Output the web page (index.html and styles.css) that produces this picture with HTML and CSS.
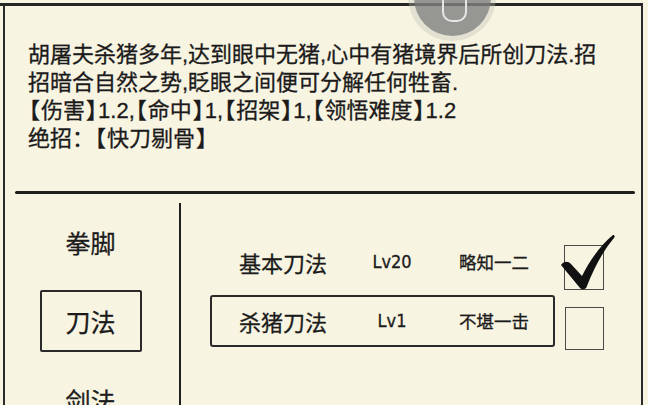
FILE: index.html
```html
<!DOCTYPE html>
<html lang="zh-CN">
<head>
<meta charset="utf-8">
<title>武学</title>
<link rel="stylesheet" href="styles.css">
</head>
<body>
<div class="frame">
  <div class="desc">
    胡屠夫杀猪多年,达到眼中无猪,心中有猪境界后所创刀法.招<br>
    招暗合自然之势,眨眼之间便可分解任何牲畜.<br>
    <span class="bk">【</span>伤害<span class="bk">】</span>1.2,<span class="bk">【</span>命中<span class="bk">】</span>1,<span class="bk">【</span>招架<span class="bk">】</span>1,<span class="bk">【</span>领悟难度<span class="bk">】</span>1.2<br>
    绝招：<span class="bk">【</span>快刀剔骨<span class="bk">】</span>
  </div>
  <div class="rule"></div>
  <div class="lower">
    <nav class="tabs">
      <div class="tab">拳脚</div>
      <div class="tab active">刀法</div>
      <div class="tab">剑法</div>
    </nav>
    <div class="skills">
      <div class="row">
        <div class="skill">
          <span class="name">基本刀法</span>
          <span class="lv">Lv20</span>
          <span class="grade">略知一二</span>
        </div>
        <div class="check on">
          <svg class="tick" viewBox="0 0 60 60" width="60" height="60">
            <path d="M3 29 C6 25 10 25 13 28 L24 40 C33 22 44 8 55 -1 C57 -1 57 1 56 2 C45 15 36 32 29 50 C28 54 24 54 22 52 Z" fill="#111"/>
          </svg>
        </div>
      </div>
      <div class="row">
        <div class="skill selected">
          <span class="name">杀猪刀法</span>
          <span class="lv">Lv1</span>
          <span class="grade">不堪一击</span>
        </div>
        <div class="check"></div>
      </div>
    </div>
  </div>
</div>
<div class="assist">
  <div class="assist-core"></div>
</div>
</body>
</html>
```
FILE: styles.css
```css
html, body {
  margin: 0;
  padding: 0;
}

body {
  width: 648px;
  height: 405px;
  overflow: hidden;
  background: #f8f4e2;
  color: #1b1b1b;
  font-family: "Noto Sans CJK SC", "Roboto", sans-serif;
  -webkit-text-stroke: 0.3px #1b1b1b;
  position: relative;
}

.frame {
  margin: 3px 5px 0 3px;
  height: 402px;
  border-top: 3px solid #262626;
  border-left: 2px solid #2b2b2b;
  border-right: 2px solid #2b2b2b;
  box-sizing: border-box;
  position: relative;
}

/* top edge runs out to the window's left side */
.frame::before {
  content: "";
  position: absolute;
  left: -5px;
  top: -3px;
  width: 5px;
  height: 3px;
  background: #262626;
}

/* Latin face first keeps each text run's box within its 28px line */
.desc {
  font-family: "Liberation Sans", "Noto Sans CJK SC", sans-serif;
  padding: 35px 0 0 23px;
  font-size: 22px;
  line-height: 28px;
  height: 115px;
}

/* half-width corner brackets */
.bk {
  margin: 0 1px;
  font-feature-settings: "halt";
}

.rule {
  margin: 35px 6px 0 10px;
  height: 2.5px;
  background: #1e1e1e;
  border-radius: 2px;
}

.lower {
  display: flex;
}

.tabs {
  width: 176px;
  flex-shrink: 0;
  margin-top: 9px;
  border-right: 2px solid #1f1f1f;
  height: 220px;
  padding: 8px 3px 0 0;
  box-sizing: border-box;
  display: flex;
  flex-direction: column;
  align-items: center;
  gap: 17px;
}

.tab {
  width: 102px;
  height: 62px;
  box-sizing: border-box;
  display: flex;
  align-items: center;
  justify-content: center;
  font-size: 25px;
  line-height: 30px;
  flex-shrink: 0;
}

.tab.active {
  border: 2px solid #2a2a2a;
  border-radius: 2px;
}

.skills {
  padding: 42px 0 0 29px;
  display: flex;
  flex-direction: column;
  gap: 5px;
}

.row {
  display: flex;
  align-items: flex-start;
}

.skill {
  width: 345px;
  height: 52px;
  box-sizing: border-box;
  border: 2px solid transparent;
  border-radius: 3px;
  display: grid;
  grid-template-columns: 100px 106px 98px;
  align-items: center;
  padding-left: 27px;
}

.skill.selected {
  border-color: #2a2a2a;
}

.name {
  font-size: 22px;
}

.lv {
  font-family: "DejaVu Sans Condensed", "Roboto", sans-serif;
  font-size: 18px;
  text-align: center;
}

.grade {
  font-size: 17.5px;
  text-align: center;
}

.check {
  width: 40px;
  height: 45px;
  margin: 9px 0 0 9px;
  box-sizing: border-box;
  border: 1.5px solid #4a4a4a;
  position: relative;
}

.row:last-child .check {
  margin-top: 12px;
  height: 43px;
  width: 39px;
  margin-left: 10px;
}

.tick {
  position: absolute;
  left: -7px;
  top: -10px;
  overflow: visible;
}

/* floating assistive button over the top edge */
.assist {
  position: absolute;
  left: 408px;
  top: -47px;
  width: 88px;
  height: 88px;
  border-radius: 50%;
  background: rgba(190, 188, 180, 0.35);
  display: flex;
  align-items: center;
  justify-content: center;
}

.assist-core {
  width: 77px;
  height: 77px;
  border-radius: 50%;
  background: rgba(120, 120, 120, 0.72);
  position: relative;
}

.assist-core::after {
  content: "";
  position: absolute;
  left: 28px;
  top: 20px;
  width: 21px;
  height: 39px;
  border: 2.5px solid #e6e6e6;
  border-radius: 10px;
}
```
